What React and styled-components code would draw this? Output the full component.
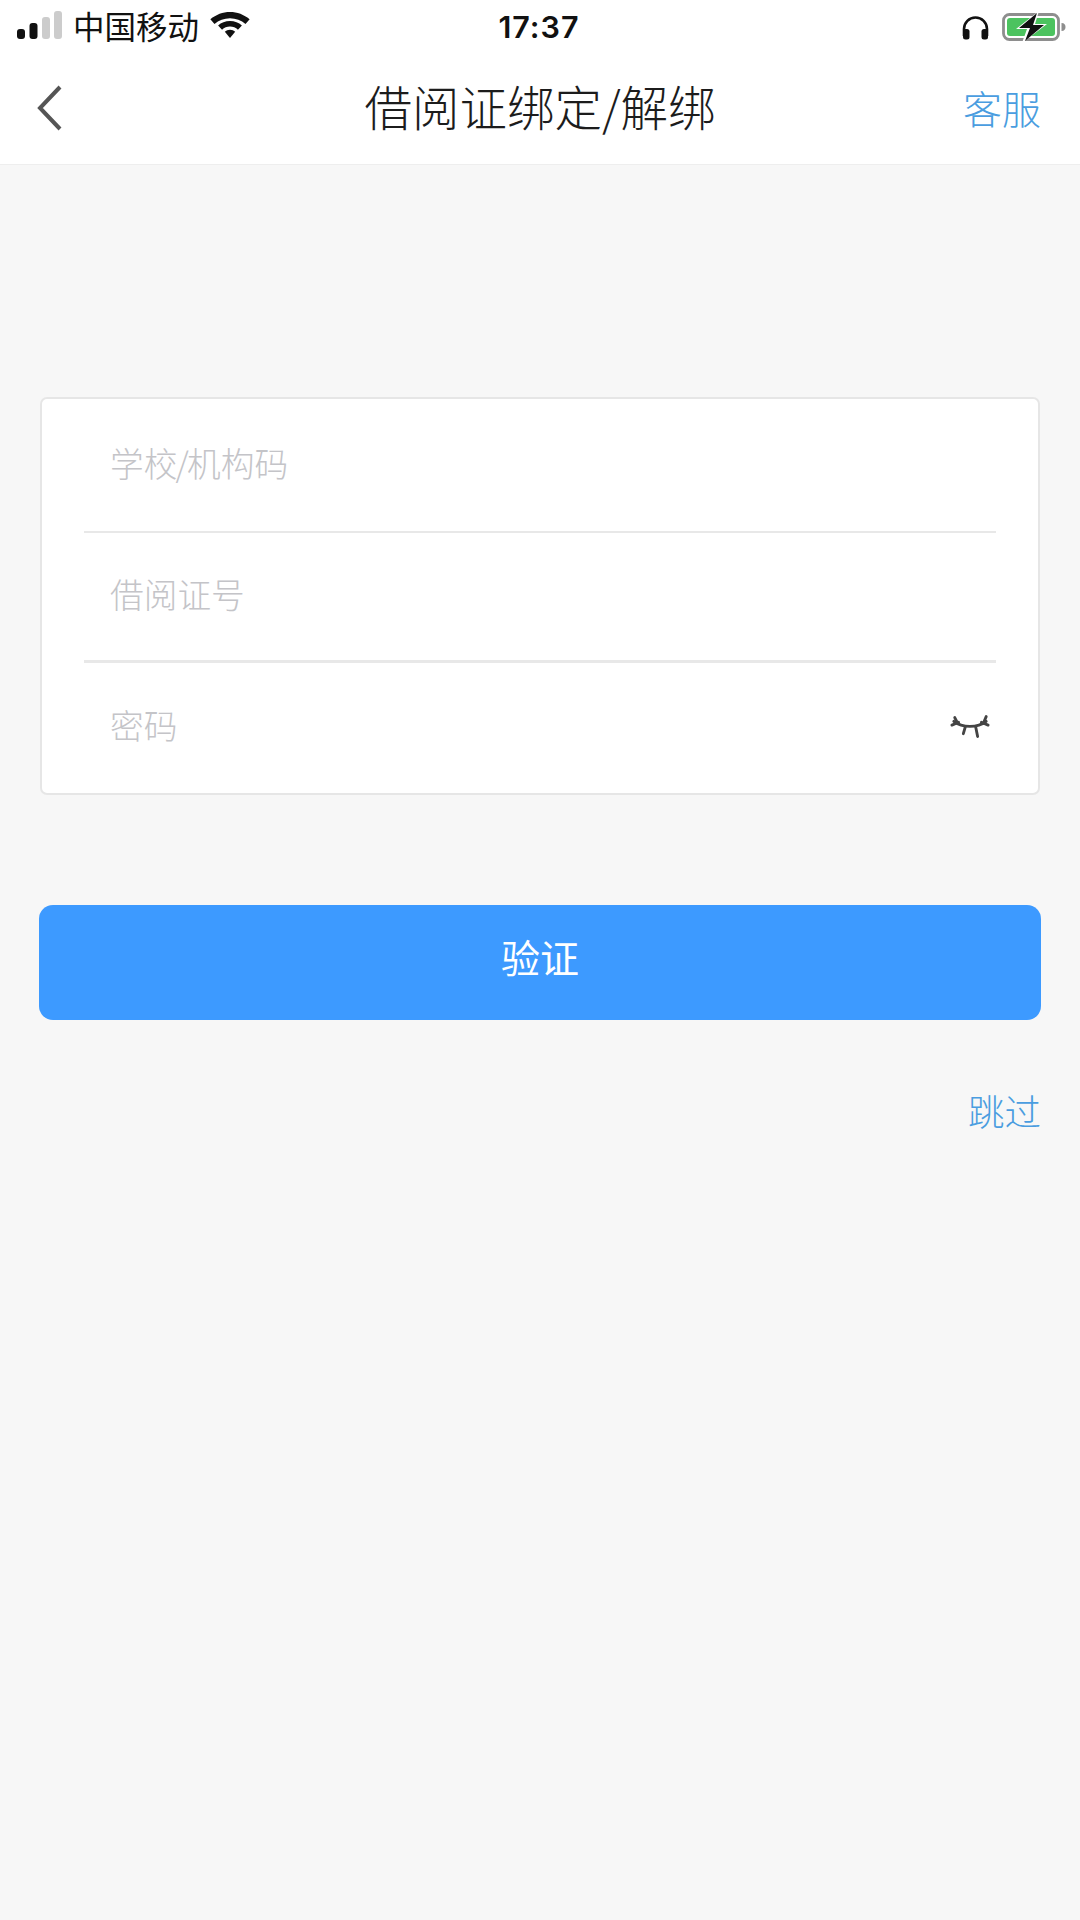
import React from "react";
import styled, { createGlobalStyle } from "styled-components";

const cjk = `"Noto Sans CJK SC", "Noto Sans", sans-serif`;

const Global = createGlobalStyle`
  html, body { margin: 0; padding: 0; background: #f7f7f7; }
  * { box-sizing: border-box; }
`;

const Page = styled.div`
  width: 1080px;
  height: 1920px;
  background: #f7f7f7;
  font-family: ${cjk};
  overflow: hidden;
  display: flex;
  flex-direction: column;
`;

const TopArea = styled.header`
  background: #fff;
  height: 165px;
  border-bottom: 1px solid #eeeeee;
  display: flex;
  flex-direction: column;
`;

const StatusBar = styled.div`
  height: 54px;
  padding: 0 14px 0 17px;
  display: grid;
  grid-template-columns: 1fr auto 1fr;
  align-items: center;
`;

const StatusLeft = styled.div`
  display: flex;
  align-items: center;
`;

const Carrier = styled.span`
  font-size: 31.5px;
  line-height: 50px;
  height: 50px;
  margin-top: -4px;
  font-weight: 400;
  color: #111;
  margin-left: 10px;
`;

const WifiIcon = styled.svg`
  width: 42px;
  height: 31px;
  margin-left: 10px;
  margin-top: -5px;
`;

const Clock = styled.span`
  font-family: Inter, "Liberation Sans", sans-serif;
  font-size: 30.5px;
  font-weight: 600;
  color: #111;
  letter-spacing: 1px;
  margin-right: 5px;
  margin-top: -1px;
`;

const StatusRight = styled.div`
  display: flex;
  align-items: center;
  justify-content: flex-end;
  gap: 13px;
`;

const NavBar = styled.div`
  flex: 1;
  position: relative;
  display: flex;
  align-items: center;
  justify-content: center;
  padding: 0 0 7px 0;
`;

const BackIcon = styled.svg`
  position: absolute;
  left: 36px;
  top: 31px;
  width: 30px;
  height: 46px;
`;

const Title = styled.h1`
  margin: 0;
  font-size: 47.5px;
  font-weight: 300;
  color: #1c1c1c;
  line-height: 64px;
`;

const ServiceLink = styled.span`
  position: absolute;
  right: 39px;
  top: 23px;
  font-size: 39px;
  line-height: 60px;
  font-weight: 300;
  color: #4a9de0;
`;

const Content = styled.main`
  padding: 232px 40px 0;
  display: flex;
  flex-direction: column;
`;

const FormCard = styled.section`
  height: 398px;
  background: #fff;
  border: 2px solid #e6e6e6;
  border-radius: 7px;
  padding: 0 42px 0 42px;
  display: flex;
  flex-direction: column;
`;

const Field = styled.div`
  flex: ${p => p.$size};
  display: flex;
  align-items: center;
  justify-content: space-between;
  padding: 0 6px 5px 26px;
  border-bottom: ${p => (p.$line ? `${p.$line} solid #e8e8e8` : "none")};
`;

const Placeholder = styled.span`
  font-size: 33.7px;
  font-weight: 300;
  line-height: 48px;
  color: #c4c4c8;
`;

const Slash = styled.span`
  margin: 0 -1.8px;
`;

const EyeIcon = styled.svg`
  width: 40px;
  height: 30px;
  margin-top: 6px;
`;

const VerifyButton = styled.button`
  margin-top: 110px;
  margin-left: -1px;
  width: 1002px;
  height: 115px;
  border: none;
  border-radius: 14px;
  background: #3d9aff;
  color: #fff;
  font-family: ${cjk};
  font-size: 39px;
  font-weight: 400;
  padding: 0 0 14px;
`;

const SkipRow = styled.div`
  display: flex;
  justify-content: flex-end;
  margin: 64px -1px 0 0;
`;

const SkipLink = styled.span`
  font-size: 36.5px;
  font-weight: 300;
  line-height: 54px;
  color: #4a9de0;
`;

const Signal = () => (
  <svg width="46" height="30" viewBox="0 0 46 30" style={{ marginTop: -3 }}>
    <rect x="0" y="18" width="8" height="10" rx="3" fill="#111" />
    <rect x="12.5" y="12" width="8" height="16" rx="3" fill="#111" />
    <rect x="25" y="6" width="8" height="22" rx="3" fill="#ccc" />
    <rect x="37" y="0" width="8" height="28" rx="3" fill="#ccc" />
  </svg>
);

const Headphones = () => (
  <svg width="27" height="24" viewBox="0 0 27 24" style={{ marginTop: 1 }}>
    <path d="M2 20V13a11.500 11.500 0 0 1 23 0v7" fill="none" stroke="#111" strokeWidth="2.6" />
    <rect x="1" y="13" width="6.500" height="10.500" rx="2.500" fill="#111" />
    <rect x="19.500" y="13" width="6.500" height="10.500" rx="2.500" fill="#111" />
  </svg>
);

const Battery = () => (
  <svg width="64" height="32" viewBox="0 0 64 32">
    <rect x="1.500" y="3.500" width="55" height="25" rx="6" fill="none" stroke="#8e8e8e" strokeWidth="2.800" />
    <rect x="5" y="7" width="48" height="18" rx="3" fill="#4cc35f" />
    <path d="M59.500 12c3 0 4 2 4 4s-1 4-4 4z" fill="#8e8e8e" />
    <path d="M37 0 L14 18 H25 L20 32 L45 13 H33 Z" fill="#fff" />
    <path d="M35 2 L17 17 H28 L23 30 L42 14 H31 Z" fill="#111" />
  </svg>
);

export default function App() {
  return (
    <Page>
      <Global />
      <TopArea>
        <StatusBar>
          <StatusLeft>
            <Signal />
            <Carrier>中国移动</Carrier>
            <WifiIcon viewBox="0 0 40 30">
              <path d="M20 3C13 3 6.500 5.500 1 10l4 4.500C9 11 14.500 9 20 9s11 2 15 5.500l4-4.500C33.500 5.500 27 3 20 3z" fill="#111" />
              <path d="M20 11.500c-4.500 0-8.500 1.500-11.500 4.500l3.800 4c2-1.800 4.800-3 7.700-3s5.700 1.200 7.700 3l3.800-4C28.500 13 24.500 11.500 20 11.500z" fill="#111" />
              <path d="M20 20c-2 0-3.800.8-5 2l5 6 5-6c-1.200-1.200-3-2-5-2z" fill="#111" />
            </WifiIcon>
          </StatusLeft>
          <Clock>17:37</Clock>
          <StatusRight>
            <Headphones />
            <Battery />
          </StatusRight>
        </StatusBar>
        <NavBar>
          <BackIcon viewBox="0 0 30 46">
            <path d="M24 2 L4 23 L24 44" fill="none" stroke="#555" strokeWidth="4" />
          </BackIcon>
          <Title>借阅证绑定/解绑</Title>
          <ServiceLink>客服</ServiceLink>
        </NavBar>
      </TopArea>
      <Content>
        <FormCard>
          <Field $size={134} $line="2px">
            <Placeholder>学校<Slash>/</Slash>机构码</Placeholder>
          </Field>
          <Field $size={128} $line="3px">
            <Placeholder>借阅证号</Placeholder>
          </Field>
          <Field $size={132}>
            <Placeholder>密码</Placeholder>
            <EyeIcon viewBox="0 0 42 30">
              <g fill="none" stroke="#444" strokeWidth="3" strokeLinecap="round">
                <path d="M4 8 C13 15 29 15 38 8" />
                <path d="M5 4 L8 10" />
                <path d="M2 12 L9 9" />
                <path d="M38 3 L35 10" />
                <path d="M40 12 L33 9" />
                <path d="M16 14 L14 21" />
                <path d="M27 14 L29 24" />
              </g>
            </EyeIcon>
          </Field>
        </FormCard>
        <VerifyButton>验证</VerifyButton>
        <SkipRow>
          <SkipLink>跳过</SkipLink>
        </SkipRow>
      </Content>
    </Page>
  );
}
